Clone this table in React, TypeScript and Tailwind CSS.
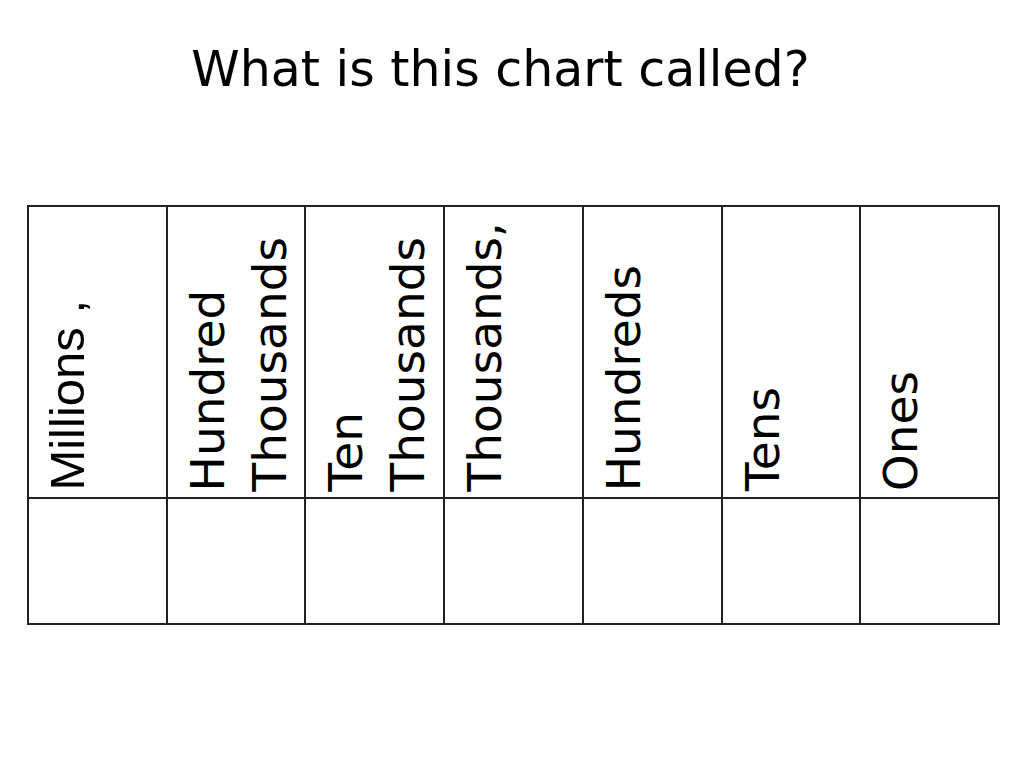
const headers: { lines: string[]; arial?: boolean }[] = [
  { lines: ["Millions ,"], arial: true },
  { lines: ["Hundred", "Thousands"] },
  { lines: ["Ten", "Thousands"] },
  { lines: ["Thousands,"] },
  { lines: ["Hundreds"] },
  { lines: ["Tens"] },
  { lines: ["Ones"] },
];

export default function App() {
  return (
    <div className="w-[1024px] h-[768px] bg-white text-black overflow-hidden">
      <h1 className="pt-[40px] pr-[23px] text-center text-[49px] leading-[60px] font-normal font-['DejaVu_Sans',sans-serif]">
        What is this chart called?
      </h1>

      <table className="mt-[105px] ml-[27px] w-[973px] table-fixed border-collapse border-2 border-[#1f1f1f]">
        <tbody>
          <tr className="h-[292px]">
            {headers.map((h, i) => (
              <td key={i} className="border-2 border-[#222] p-0 align-bottom">
                <div className={h.arial ? "flex items-end pl-[11px] pb-[6px] h-[290px]" : "flex items-end pl-[9px] pb-[6px] h-[290px]"}>
                  <div
                    className={
                      h.arial
                        ? "[writing-mode:vertical-rl] rotate-180 text-[49px] leading-[54px] font-['Liberation_Sans',sans-serif] whitespace-nowrap"
                        : "[writing-mode:vertical-rl] rotate-180 text-[47px] leading-[62px] font-['DejaVu_Sans',sans-serif] whitespace-nowrap"
                    }
                  >
                    {h.lines.map((l, j) => (
                      <div key={j}>{l}</div>
                    ))}
                  </div>
                </div>
              </td>
            ))}
          </tr>
          <tr className="h-[126px]">
            {headers.map((_, i) => (
              <td key={i} className="border-2 border-[#222] p-0" />
            ))}
          </tr>
        </tbody>
      </table>
    </div>
  );
}
